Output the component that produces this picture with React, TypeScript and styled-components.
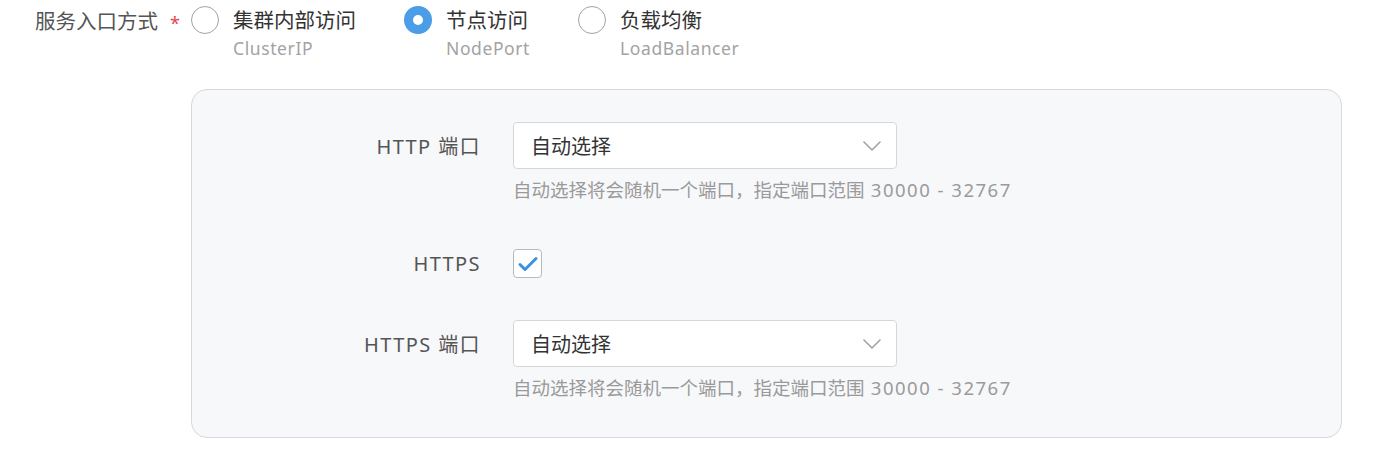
import React, { useState } from 'react';
import styled, { createGlobalStyle } from 'styled-components';

const GlobalStyle = createGlobalStyle`
  body {
    margin: 0;
    background: #fff;
    font-family: 'Noto Sans', 'Noto Sans CJK SC', sans-serif;
  }
`;

const Page = styled.div`
  padding-top: 8px;
  width: 1390px;
`;

const FormItem = styled.div`
  display: flex;
  align-items: flex-start;
`;

const MainLabel = styled.div`
  width: 156px;
  padding-left: 35px;
  display: flex;
  align-items: center;
  height: 24px;
  font-size: 20.5px;
  color: #555;
`;

const Required = styled.span`
  color: #e5484d;
  font-size: 18px;
  margin-left: 12px;
  margin-top: 6px;
`;

const Content = styled.div`
  display: flex;
  flex-direction: column;
`;

const RadioGroup = styled.div`
  display: flex;
  gap: 48px;
`;

const RadioItem = styled.label`
  display: flex;
  gap: 14px;
  cursor: pointer;
`;

const RadioCircle = styled.span<{ $checked: boolean }>`
  box-sizing: border-box;
  width: 28px;
  height: 28px;
  margin-top: -2px;
  border-radius: 50%;
  border: ${(p) => (p.$checked ? '9px solid #4a9de6' : '1px solid #9ea2a9')};
  background: #fff;
  flex-shrink: 0;
`;

const RadioText = styled.div`
  display: flex;
  flex-direction: column;
`;

const RadioTitle = styled.span`
  font-size: 20.5px;
  line-height: 24px;
  color: #333;
`;

const RadioSub = styled.span`
  font-size: 17.5px;
  letter-spacing: 0.6px;
  line-height: 24px;
  margin-top: 4px;
  color: #a3a3a3;
`;

const Panel = styled.div`
  margin-top: 29px;
  margin-left: 191px;
  width: 1151px;
  box-sizing: border-box;
  border: 1px solid #d6d8dd;
  border-radius: 16px;
  background: #f7f8fa;
  padding: 32px 0;
`;

const PanelRow = styled.div<{ $last?: boolean }>`
  display: flex;
  gap: 32px;
  margin-bottom: ${(p) => (p.$last ? 0 : 33)}px;
`;

const PanelLabel = styled.div`
  width: 289px;
  height: 47px;
  display: flex;
  align-items: center;
  justify-content: flex-end;
  font-size: 20px;
  letter-spacing: 1.4px;
  color: #555;
`;

const Field = styled.div`
  display: flex;
  flex-direction: column;
`;

const Select = styled.div`
  box-sizing: border-box;
  width: 384px;
  height: 47px;
  border: 1px solid #d3d6db;
  border-radius: 4px;
  background: #fff;
  display: flex;
  align-items: center;
  justify-content: space-between;
  padding: 0 15px 0 17px;
  font-size: 20px;
  color: #333;
  cursor: pointer;
`;

const Help = styled.div`
  margin-top: 6px;
  margin-bottom: 2px;
  line-height: 30px;
  font-size: 18.5px;
  color: #9a9a9a;
  white-space: nowrap;
`;

const Range = styled.span`
  letter-spacing: 1.5px;
`;

const CheckWrap = styled.div`
  height: 47px;
  display: flex;
  align-items: center;
`;

const CheckBox = styled.span`
  box-sizing: border-box;
  width: 29px;
  height: 29px;
  border: 1px solid #b5b9c0;
  border-radius: 4px;
  background: #fff;
  display: flex;
  align-items: center;
  justify-content: center;
  cursor: pointer;
`;

const Chevron = () => (
  <svg width="18" height="10" viewBox="0 0 18 10" fill="none">
    <path d="M1 1l8 8 8-8" stroke="#9ea1a6" strokeWidth="1.6" strokeLinecap="round" strokeLinejoin="round" />
  </svg>
);

const options = [
  { key: 'ClusterIP', title: '集群内部访问' },
  { key: 'NodePort', title: '节点访问' },
  { key: 'LoadBalancer', title: '负载均衡' },
];

const HelpText = () => (
  <Help>
    自动选择将会随机一个端口，指定端口范围<Range> 30000 - 32767</Range>
  </Help>
);

const App: React.FC = () => {
  const [type, setType] = useState('NodePort');
  const [https, setHttps] = useState(true);

  return (
    <Page>
      <GlobalStyle />
      <FormItem>
        <MainLabel>
          服务入口方式<Required>*</Required>
        </MainLabel>
        <Content>
          <RadioGroup>
            {options.map((o) => (
              <RadioItem key={o.key} onClick={() => setType(o.key)}>
                <RadioCircle $checked={type === o.key} />
                <RadioText>
                  <RadioTitle>{o.title}</RadioTitle>
                  <RadioSub>{o.key}</RadioSub>
                </RadioText>
              </RadioItem>
            ))}
          </RadioGroup>
        </Content>
      </FormItem>

      <Panel>
        <PanelRow>
          <PanelLabel>HTTP 端口</PanelLabel>
          <Field>
            <Select>
              自动选择
              <Chevron />
            </Select>
            <HelpText />
          </Field>
        </PanelRow>
        <PanelRow>
          <PanelLabel>HTTPS</PanelLabel>
          <CheckWrap>
            <CheckBox onClick={() => setHttps(!https)}>
              {https && (
                <svg width="22" height="18" viewBox="0 0 22 18" fill="none">
                  <path d="M3 9.5l5 5L19 3.5" stroke="#3f8fe0" strokeWidth="3" strokeLinecap="round" strokeLinejoin="round" />
                </svg>
              )}
            </CheckBox>
          </CheckWrap>
        </PanelRow>
        <PanelRow $last>
          <PanelLabel>HTTPS 端口</PanelLabel>
          <Field>
            <Select>
              自动选择
              <Chevron />
            </Select>
            <HelpText />
          </Field>
        </PanelRow>
      </Panel>
    </Page>
  );
};

export default App;
